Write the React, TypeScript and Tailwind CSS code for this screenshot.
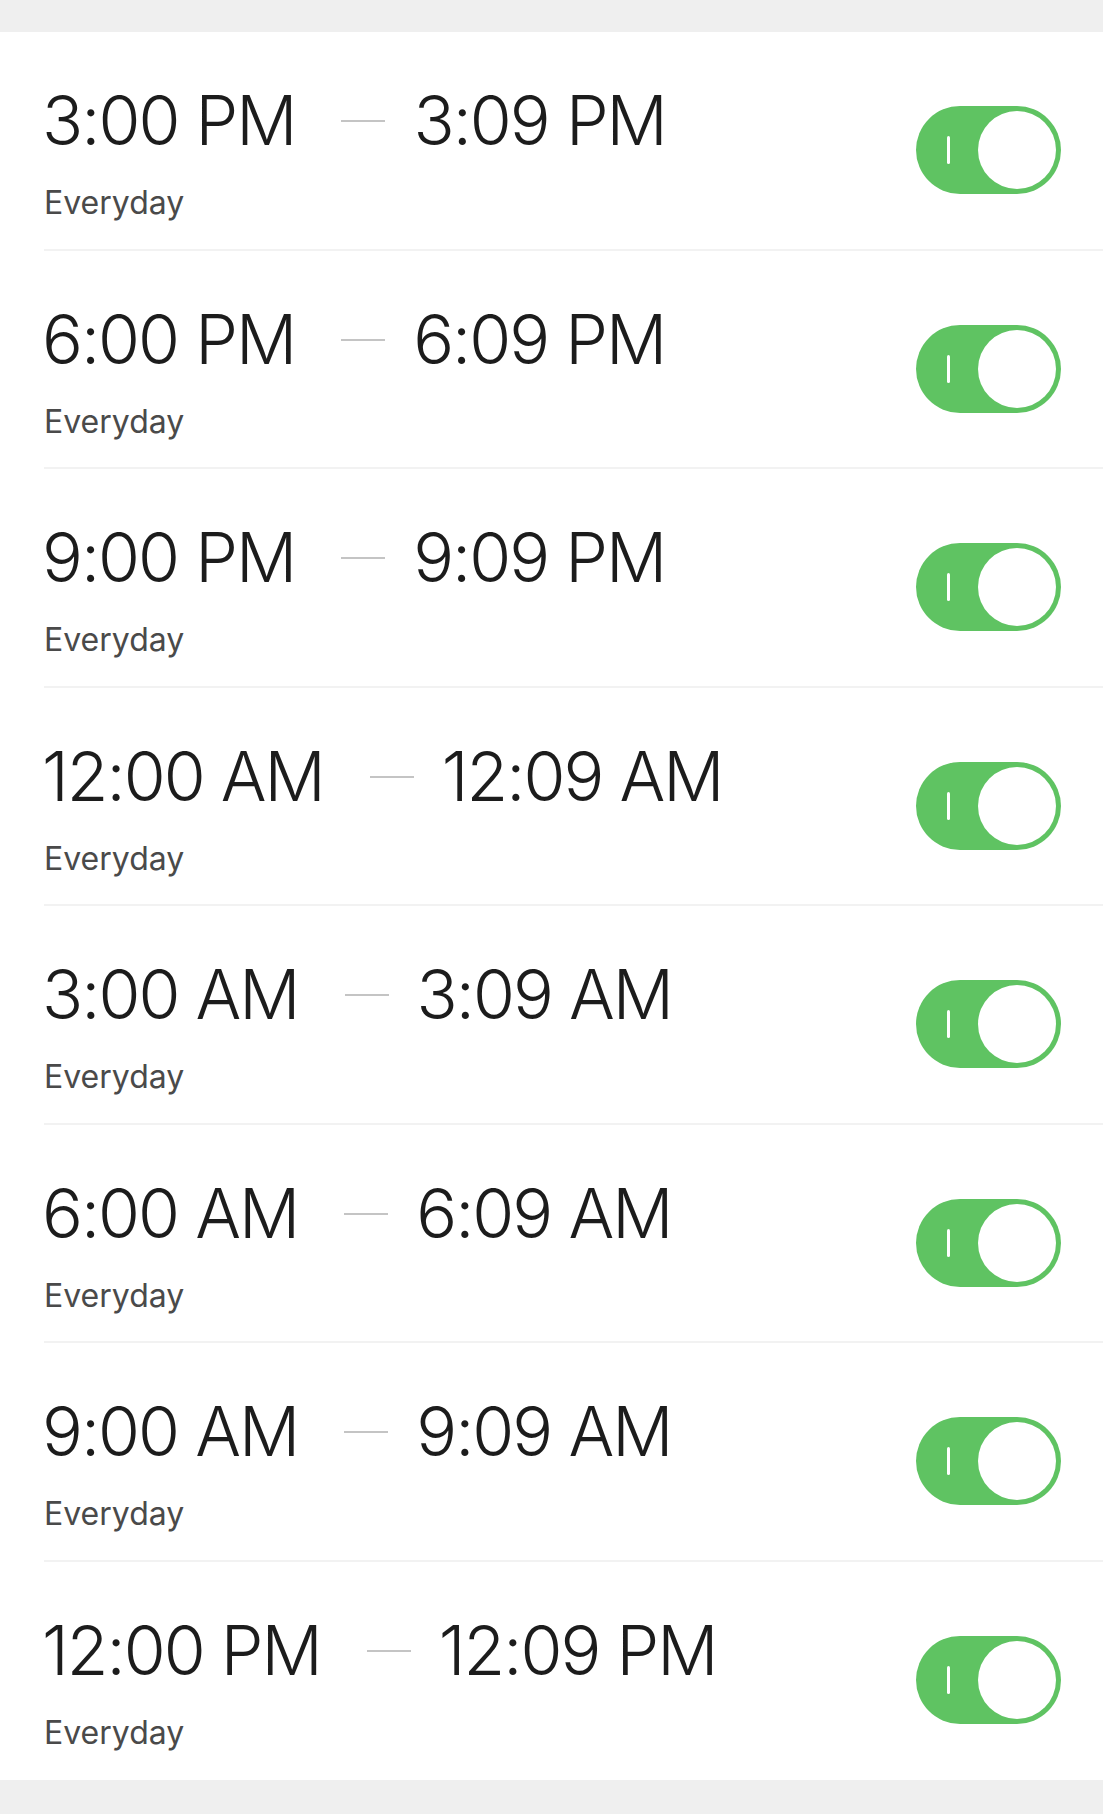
import React from "react";

const rows = [
  ["3:00 PM", "3:09 PM"],
  ["6:00 PM", "6:09 PM"],
  ["9:00 PM", "9:09 PM"],
  ["12:00 AM", "12:09 AM"],
  ["3:00 AM", "3:09 AM"],
  ["6:00 AM", "6:09 AM"],
  ["9:00 AM", "9:09 AM"],
  ["12:00 PM", "12:09 PM"],
];

function Toggle() {
  return (
    <div className="flex h-[88px] w-[145px] shrink-0 items-center justify-between rounded-full bg-[#5fc362] pl-[31px] pr-[5px]">
      <span className="h-[28px] w-[3px] rounded-full bg-white" />
      <span className="h-[78px] w-[78px] rounded-full bg-white" />
    </div>
  );
}

export default function App() {
  return (
    <div
      className="min-h-[1814px] bg-[#efefef] pt-[32px]"
      style={{ fontFamily: "Inter, 'Liberation Sans', sans-serif" }}
    >
      <ul className="bg-white">
        {rows.map(([from, to], i) => (
          <li key={i} className="pl-[44px]">
            <div
              className={`flex h-[218.5px] items-start justify-between pr-[42px] ${
                i < rows.length - 1 ? "border-b-2 border-[#f2f2f2]" : ""
              }`}
            >
              <div className="-ml-[2px] flex flex-col pt-[50px]">
                <div className="flex items-center text-[68px] font-light leading-[76px] tracking-[-2px] text-[#1c1c1c]">
                  <span>{from}</span>
                  <span className="ml-[46px] mr-[28px] mt-[2px] h-[2px] w-[44px] bg-[#c4c4c4]" />
                  <span>{to}</span>
                </div>
                <div className="ml-[2px] mt-[26px] text-[32px] leading-[38px] text-[#4a4a4a]">
                  Everyday
                </div>
              </div>
              <div className="pt-[74px]">
                <Toggle />
              </div>
            </div>
          </li>
        ))}
      </ul>
    </div>
  );
}
